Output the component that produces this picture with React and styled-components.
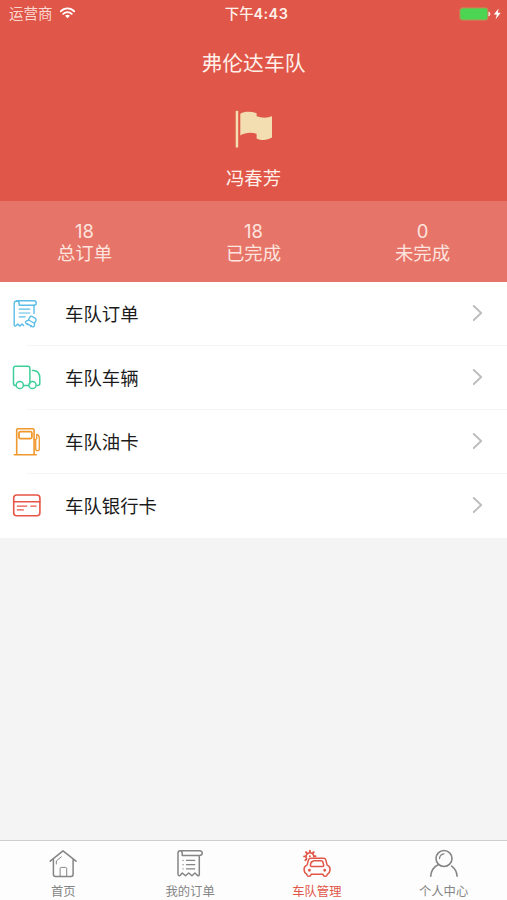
import styled, { createGlobalStyle } from "styled-components";

const GlobalStyle = createGlobalStyle`
  * {
    box-sizing: border-box;
  }
  body {
    margin: 0;
    background-color: #f4f4f4;
    font-family: Inter, "Noto Sans CJK SC", sans-serif;
  }
  svg {
    display: block;
    flex-shrink: 0;
    fill: none;
    stroke-linecap: round;
    stroke-linejoin: round;
  }
`;

const Wrap = styled.div`
  width: 100%;
  height: 900px;
  display: flex;
  flex-direction: column;
  overflow: hidden;
`;

const Header = styled.header`
  height: 201px;
  background-color: #e05648;
  color: #fff0e9;
  display: flex;
  flex-direction: column;
  align-items: center;
`;

const StatusBar = styled.div`
  width: 100%;
  height: 28px;
  padding: 0 5px 0 9px;
  display: grid;
  grid-template-columns: 1fr auto 1fr;
  align-items: center;
  font-size: 14.5px;
  line-height: 28px;
`;

const Carrier = styled.div`
  display: flex;
  align-items: center;
  gap: 7px;
  color: #fbd9d2;
  svg {
    margin-top: -2px;
  }
`;

const Time = styled.div`
  padding-left: 2px;
  font-size: 14.4px;
  font-weight: 600;
  letter-spacing: 0.45px;
  span {
    font-weight: 500;
    letter-spacing: 0;
  }
`;

const Power = styled.div`
  display: flex;
  justify-content: flex-end;
`;

const Title = styled.h1`
  margin: 21px 0 0;
  font-size: 20.8px;
  font-weight: 400;
  line-height: 30px;
`;

const FlagBox = styled.div`
  height: 38px;
  margin-top: 31px;
`;

const UserName = styled.div`
  margin-top: 17px;
  font-size: 18.4px;
  line-height: 26px;
`;

const Stats = styled.section`
  height: 81px;
  padding-top: 19px;
  background-color: #e77469;
  display: flex;
`;

const Stat = styled.div`
  flex: 1;
  text-align: center;
  font-size: 18.4px;
  line-height: 22px;
  color: #fde4de;
`;

const List = styled.ul`
  margin: 0;
  padding: 0;
  list-style: none;
  background-color: #fff;
`;

const Row = styled.li`
  height: 64px;
  padding-left: 12px;
  display: flex;
  align-items: center;
  background: linear-gradient(#f5f5f5, #f5f5f5) 27px 100% / 100% 1px no-repeat;
  &:last-child {
    background: none;
  }
`;

const RowLabel = styled.span`
  flex: 1;
  margin-left: 23px;
  font-size: 18.4px;
  line-height: 26px;
  color: #1c1c1c;
`;

const Arrow = styled.div`
  margin: 0 24px 2px 0;
`;

const TabBar = styled.nav`
  height: 60px;
  margin-top: auto;
  border-top: 1px solid #cfcfcf;
  background-color: #fdfdfd;
  display: flex;
`;

const Tab = styled.div`
  flex: 1;
  padding-top: 7px;
  display: flex;
  flex-direction: column;
  align-items: center;
  gap: 5px;
  font-size: 12.3px;
  line-height: 17px;
  color: ${(props) => (props.$active ? "#e05648" : "#858585")};
  svg {
    stroke: currentColor;
  }
`;

const WifiIcon = () => (
  <svg width="15" height="12" viewBox="0 0 16 12" stroke="#fff" strokeLinecap="butt">
    <path d="M.8 4.2C4.8.1 11.2.1 15.2 4.2" strokeWidth="2" />
    <path d="M3.4 7C6 4.3 10 4.3 12.6 7" strokeWidth="1.9" />
    <path d="M5.4 8.8Q8 6.8 10.6 8.8L8 11.6z" fill="#fff" stroke="none" />
  </svg>
);

const BatteryIcon = () => (
  <svg width="43" height="14" viewBox="0 0 43 14">
    <rect x=".9" y=".9" width="28" height="12.2" rx="2.4" fill="#4bd552" stroke="#c58b55" />
    <path d="M30.2 5.2q2 1.8 0 3.6z" fill="#fff" stroke="#fbd9d2" />
    <path d="M39.7 1.5 34.8 7.6h3l-1.1 4.7 5-6.5h-3z" fill="#fff" />
  </svg>
);

const FlagIcon = () => (
  <svg width="38" height="38" viewBox="0 0 38 38">
    <path d="M.7.8h2.5v36.7H.7z" fill="#f2deb1" />
    <path
      d="M5.3 3.7C9.5 1.2 16 1.3 21.6 3.2v3.1c5.3 1.8 10.6 1.8 15.4 0v21.2c-4.8 3-10.5 3.3-15.4.9v-4.7c-5.5-1.5-11.6-1.1-16.3 1.8z"
      fill="#f2deb1"
    />
  </svg>
);

const FleetOrderIcon = () => (
  <svg width="30" height="30" viewBox="0 0 30 30" stroke="#5bbde8" strokeWidth="1.4">
    <path d="M4.5 1.8H22c3 0 3 4.4 0 4.4H7.2V4.4q-.2-2.4-2.6-2.4-2.4.2-2.4 2.8v20.8q0 2.3 2 1l1.5-1.5 2.3 2 2-2 1.6 1.4" />
    <path d="M22 6.2v8.3" />
    <path d="M7.2 10.2h10.6M7.2 14h10.6M7.2 17.8h6" strokeWidth="1.2" />
    <path
      d="m14 22.2 2.2-.8 1.6-3.2q.8-1.4 2.2-.8l3.3 1.9q1.2.9.6 2.3l-1.4 2.8-.2 2.5q-.6 1.5-2 .8l-6.2-3.4q-1.3-.9-.1-2.1z"
      strokeWidth="1.4"
    />
    <path d="m17 21.2 5 2.9M15.8 24.6l-.5 1.2M19.2 26.6l-.6 1.2" strokeWidth="1.2" />
  </svg>
);

const TruckIcon = () => (
  <svg width="30" height="30" viewBox="0 0 30 30" stroke="#3fcf9b" strokeWidth="1.5">
    <path d="M4.2 22.6H3.5q-2-.2-2-2.2V5.4q0-2.2 2.2-2.2h12.2q2 0 2 2.2v15.4M11.4 22.6h5.2" />
    <path d="M20.4 7.4h1.5c4 .5 5.9 3.6 5.9 7.5v5.8q0 1.6-2.5 1.8" />
    <circle cx="7.8" cy="22" r="3.6" />
    <circle cx="20.5" cy="22" r="3.6" />
  </svg>
);

const FuelIcon = () => (
  <svg width="30" height="30" viewBox="0 0 30 30" stroke="#f0982e" strokeWidth="1.6">
    <path d="M2.3 27.8h21.9M4.7 27.6V3q0-1.2 1.2-1.2h14.8q1.4 0 1.4 1.2v24.6" />
    <rect x="7" y="4.6" width="12.9" height="7" rx="1.5" strokeWidth="1.8" />
    <path d="M22.2 12.3h1.5v9.4q0 2 1.7 2 1.9 0 1.9-2V11.2q0-3.4-2.6-3.8v4.4" strokeWidth="1.3" />
  </svg>
);

const CardIcon = () => (
  <svg width="30" height="30" viewBox="0 0 30 30" stroke="#e65546" strokeWidth="1.6">
    <rect x="1.7" y="4" width="26.2" height="20.8" rx="3" />
    <path d="M2 10.8h25.8" />
    <path d="M5.2 15.1h9.6M18.8 15.1h5.3M5.2 18.9h6.2" strokeWidth="1.1" />
  </svg>
);

const ArrowIcon = () => (
  <svg width="11" height="16" viewBox="0 0 11 16" stroke="#bdbdbd" strokeWidth="1.9" strokeLinejoin="miter">
    <path d="m1.8 1 7.4 7-7.4 7" />
  </svg>
);

const HomeIcon = () => (
  <svg width="30" height="30" viewBox="0 0 30 30" strokeWidth="1.5">
    <path d="M2.2 13.2 15 2.8l13 10.4M5.4 11.3v15q0 2.1 2 2.1h15.7q2 0 2-2.1v-15" />
    <path d="M12.1 28.1v-7.5q0-1.2 1.2-1.2h4.2q1.2 0 1.2 1.2v7.5" strokeWidth="1" />
    <path d="M8.3 16v-3l5-4.2" strokeWidth="1" />
  </svg>
);

const OrderIcon = () => (
  <svg width="30" height="30" viewBox="0 0 30 30" strokeWidth="1.5">
    <path d="M5.5 2.8h19c4 0 3.3 4.6 0 4.6H7.2V5Q7 2.8 5.2 2.8 3 2.8 3 5.2v20.7q0 2.4 2 1.6l2.3-2.5 3.2 2.8 3.2-2.8 3.2 2.8L20 25l2.5 2.5q1.8.9 1.8-1.2V7.4" />
    <path d="M11.5 12.4h8.2M11.5 16.7h8.2M11.5 20.8h8.2" strokeWidth="1.3" />
    <path d="M8 12.4h.1M8 16.7h.1M8 20.8h.1" strokeWidth="1.3" />
  </svg>
);

const FleetIcon = () => (
  <svg width="30" height="30" viewBox="0 0 30 30" strokeWidth="1.5">
    <path d="M9 10.3h12.6q1.8 0 2.2 1.6l1.3 5.2c2.2.6 2.9 2.2 2.9 4.2 0 2.5-.8 4.2-2.6 4.8l-.4 1.1q-.5 1.1-1.8 1.1-1.9 0-2.2-2H9.1q-.3 2-2.2 2-1.3 0-1.8-1.1l-.4-1.1C2.9 25.5 2.1 23.8 2.1 21.3c0-2 .7-3.6 2.9-4.2l1.5-5.2q.5-1.6 2.5-1.6z" />
    <path d="m9.4 13.8-1 3.2q-.3 1.4 1.1 1.4h11.1q1.4 0 1.1-1.4l-.9-3.2q-.3-1-1.4-1h-7.6q-1.1 0-1.4 1z" />
    <circle cx="7.4" cy="22.2" r=".7" />
    <circle cx="22.7" cy="22.2" r=".7" />
    <path d="M4.6 10.7a3.9 3.9 0 1 1 7.2-2.3" strokeWidth="1.6" />
    <path
      d="M7.9 3.8V2.7M10.9 5l.9-.9M12.4 8.2h1.1M4.9 5 4 4.1M3.4 8.4H2.1M4.2 11.3l-.8.9M7.8 8.2h.1"
      strokeWidth="1.9"
    />
  </svg>
);

const UserIcon = () => (
  <svg width="30" height="30" viewBox="0 0 30 30" strokeWidth="1.6">
    <circle cx="15" cy="10.5" r="8" />
    <path d="M9.6 16.6C4.8 18.8 2.2 23 1.7 28.2M22.6 18.2c3.3 2.2 5.1 5.8 5.5 10" />
    <path d="M10.5 10.5c.2-2.6 1.8-4.3 4.4-4.7" strokeWidth="1.3" />
  </svg>
);

const stats = [
  { count: 18, name: "总订单" },
  { count: 18, name: "已完成" },
  { count: 0, name: "未完成" },
];

const rows = [
  { name: "车队订单", Icon: FleetOrderIcon },
  { name: "车队车辆", Icon: TruckIcon },
  { name: "车队油卡", Icon: FuelIcon },
  { name: "车队银行卡", Icon: CardIcon },
];

const tabs = [
  { name: "首页", Icon: HomeIcon },
  { name: "我的订单", Icon: OrderIcon },
  { name: "车队管理", Icon: FleetIcon, active: true },
  { name: "个人中心", Icon: UserIcon },
];

const App = () => {
  return (
    <Wrap>
      <GlobalStyle />
      <Header>
        <StatusBar>
          <Carrier>
            运营商
            <WifiIcon />
          </Carrier>
          <Time>
            <span>下午</span>4:43
          </Time>
          <Power>
            <BatteryIcon />
          </Power>
        </StatusBar>
        <Title>弗伦达车队</Title>
        <FlagBox>
          <FlagIcon />
        </FlagBox>
        <UserName>冯春芳</UserName>
      </Header>
      <Stats>
        {stats.map((stat) => (
          <Stat key={stat.name}>
            <div>{stat.count}</div>
            <div>{stat.name}</div>
          </Stat>
        ))}
      </Stats>
      <List>
        {rows.map(({ name, Icon }) => (
          <Row key={name}>
            <Icon />
            <RowLabel>{name}</RowLabel>
            <Arrow>
              <ArrowIcon />
            </Arrow>
          </Row>
        ))}
      </List>
      <TabBar>
        {tabs.map(({ name, Icon, active }) => (
          <Tab key={name} $active={active}>
            <Icon />
            <span>{name}</span>
          </Tab>
        ))}
      </TabBar>
    </Wrap>
  );
};

export default App;
